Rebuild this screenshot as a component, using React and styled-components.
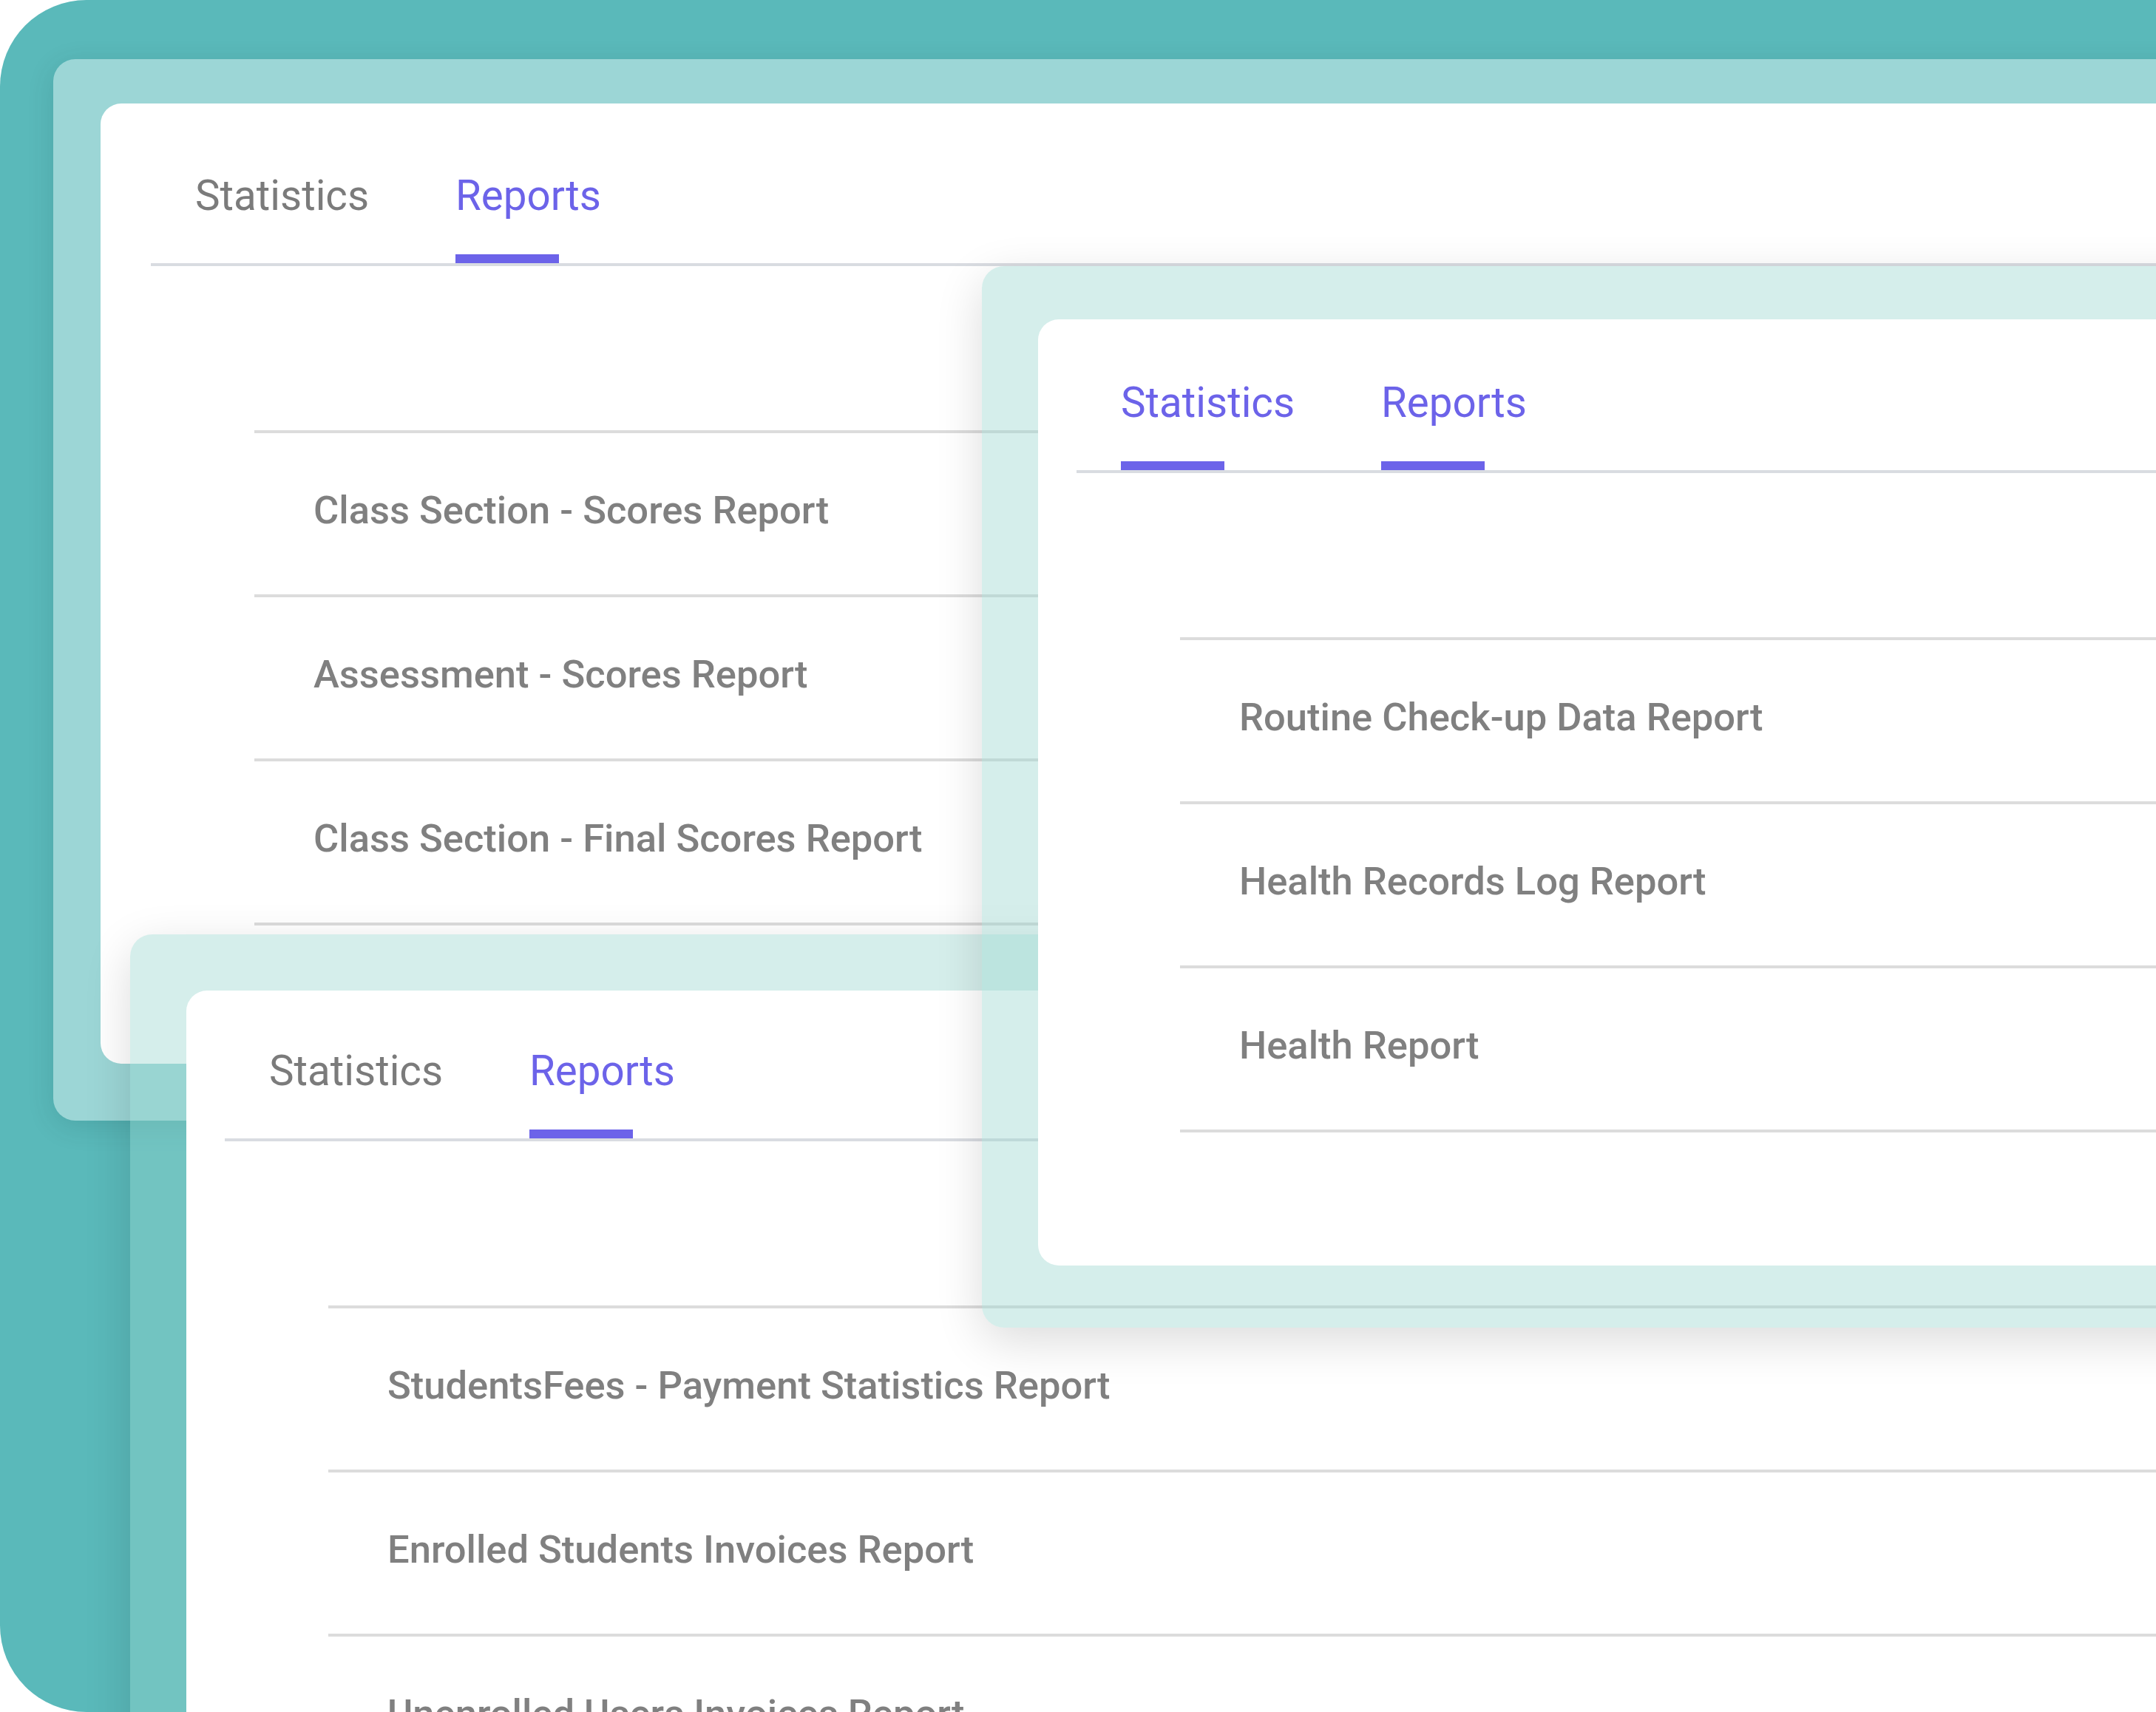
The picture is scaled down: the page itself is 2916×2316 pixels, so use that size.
import React from "react";
import styled, { createGlobalStyle } from "styled-components";

const GlobalStyle = createGlobalStyle`
  html, body {
    margin: 0;
    padding: 0;
    background: #ffffff;
    overflow: hidden;
  }
  body {
    font-family: Roboto, "Liberation Sans", Arial, sans-serif;
  }
`;

const Stage = styled.main`
  position: relative;
  width: 2916px;
  height: 2316px;
  overflow: hidden;
  background: #5ab9ba;
  border-radius: 117px 0 0 117px;
`;

const Window = styled.section`
  position: absolute;
  left: ${(p) => p.$x}px;
  top: ${(p) => p.$y}px;
  width: ${(p) => p.$w}px;
  height: ${(p) => p.$h}px;
  z-index: ${(p) => p.$z};
  box-sizing: border-box;
  display: flex;
  padding: ${(p) => p.$pad};
  border-radius: 30px;
  background: ${(p) => (p.$tint ? "rgba(150, 212, 205, 0.4)" : "#9cd6d6")};
  box-shadow: ${(p) =>
    p.$tint
      ? "0 18px 64px rgba(0, 0, 0, 0.14)"
      : "0 8px 36px rgba(0, 60, 60, 0.14)"};
`;

const Card = styled.div`
  flex: 1;
  display: flex;
  flex-direction: column;
  background: #ffffff;
  border-radius: 28px;
  overflow: hidden;
`;

const TabBar = styled.nav`
  display: flex;
  margin-left: ${(p) => p.$inset}px;
  padding-top: ${(p) => p.$top}px;
  padding-left: 60px;
  border-bottom: 4px solid #d9dce1;
`;

const Tab = styled.div`
  flex: 0 0 352px;
  display: flex;
  flex-direction: column;
  align-items: flex-start;
  font-size: 56.5px;
  line-height: 56px;
  font-weight: 400;
  white-space: nowrap;
  color: ${(p) => (p.$active ? "#6c63e9" : "#7b7b7b")};
`;

const Indicator = styled.span`
  display: block;
  margin-top: 51px;
  width: 140px;
  height: 12px;
  background: ${(p) => (p.$active ? "#6c63e9" : "transparent")};
`;

const ReportList = styled.ul`
  list-style: none;
  margin: 222px 0 0 ${(p) => p.$inset}px;
  padding: 0;
  border-bottom: 4px solid #dcdcdc;
`;

const ReportRow = styled.li`
  border-top: 4px solid #dcdcdc;
  padding: 78px 0 88px 80px;
  font-size: 52.5px;
  line-height: 52px;
  font-weight: 500;
  color: #808080;
  white-space: nowrap;
`;

function ReportsCard({ tabInset, tabTop, listInset, activeTabs, reports }) {
  return (
    <Card>
      <TabBar $inset={tabInset} $top={tabTop}>
        {["Statistics", "Reports"].map((t) => (
          <Tab key={t} $active={activeTabs.includes(t)}>
            {t}
            <Indicator $active={activeTabs.includes(t)} />
          </Tab>
        ))}
      </TabBar>
      <ReportList $inset={listInset}>
        {reports.map((r) => (
          <ReportRow key={r}>{r}</ReportRow>
        ))}
      </ReportList>
    </Card>
  );
}

export default function App() {
  return (
    <>
      <GlobalStyle />
      <Stage>
        <Window $x={72} $y={80} $w={3000} $h={1436} $z={1} $pad="60px 0 77px 64px">
          <ReportsCard
            tabInset={68}
            tabTop={97}
            listInset={208}
            activeTabs={["Reports"]}
            reports={[
              "Class Section - Scores Report",
              "Assessment - Scores Report",
              "Class Section - Final Scores Report",
            ]}
          />
        </Window>
        <Window $x={176} $y={1264} $w={3000} $h={1400} $z={2} $tint $pad="76px 0 0 76px">
          <ReportsCard
            tabInset={52}
            tabTop={81}
            listInset={192}
            activeTabs={["Reports"]}
            reports={[
              "StudentsFees - Payment Statistics Report",
              "Enrolled Students Invoices Report",
              "Unenrolled Users Invoices Report",
            ]}
          />
        </Window>
        <Window $x={1328} $y={360} $w={2000} $h={1436} $z={3} $tint $pad="72px 0 84px 76px">
          <ReportsCard
            tabInset={52}
            tabTop={85}
            listInset={192}
            activeTabs={["Statistics", "Reports"]}
            reports={[
              "Routine Check-up Data Report",
              "Health Records Log Report",
              "Health Report",
            ]}
          />
        </Window>
      </Stage>
    </>
  );
}
